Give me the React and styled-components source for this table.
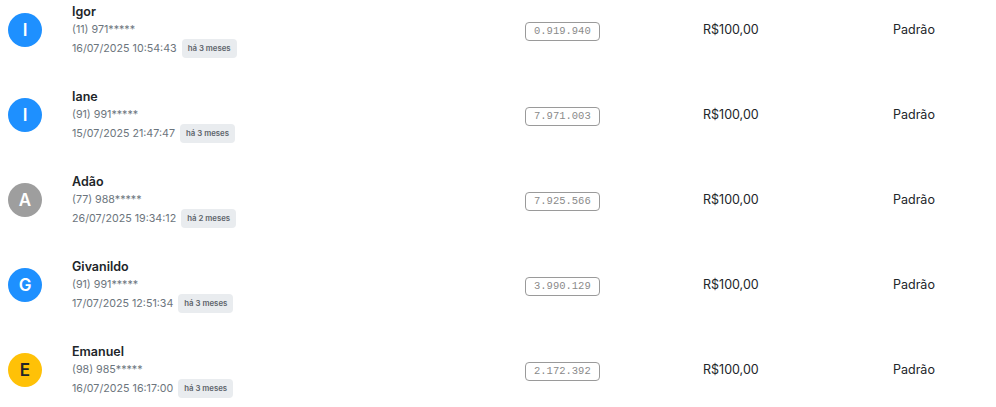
import React from 'react';
import styled, { createGlobalStyle } from 'styled-components';

const GlobalStyle = createGlobalStyle`
    body {
        margin: 0;
        background: #ffffff;
        font-family: Inter, 'Noto Sans', sans-serif;
        overflow: hidden;
    }
`;

const List = styled.div`
    margin-top: -13px;
`;

const Row = styled.div`
    display: grid;
    grid-template-columns: 72px 420px 140px 190px 1fr;
    align-items: center;
    height: 85px;
`;

const Avatar = styled.div`
    width: 34px;
    height: 34px;
    margin-left: 8px;
    border-radius: 50%;
    background: ${(p) => p.bg};
    color: ${(p) => p.fg || '#ffffff'};
    display: flex;
    align-items: center;
    justify-content: center;
    font-size: 17px;
    font-weight: 600;
`;

const Info = styled.div`
    display: flex;
    flex-direction: column;
    padding-top: 2px;
    color: #6c757d;
    font-size: 10.7px;
`;

const Name = styled.div`
    color: #212529;
    font-size: 12.5px;
    font-weight: 600;
    line-height: 18px;
`;

const Phone = styled.div`
    line-height: 18px;
`;

const DateLine = styled.div`
    display: flex;
    align-items: center;
    gap: 5px;
    line-height: 20px;
`;

const Badge = styled.span`
    background: #e9ecef;
    color: #5c636a;
    font-size: 7.8px;
    font-weight: 600;
    padding: 5px 6px;
    border-radius: 4px;
    line-height: 9px;
`;

const CodeCell = styled.div`
    padding-left: 33px;
`;

const Code = styled.span`
    display: inline-block;
    font-family: 'Liberation Mono', 'DejaVu Sans Mono', monospace;
    font-size: 10.5px;
    color: #8a8a8a;
    border: 1px solid #9a9a9a;
    border-radius: 4px;
    padding: 2px 8px;
    line-height: 13px;
`;

const Value = styled.div`
    color: #212529;
    font-size: 12.5px;
    padding-left: 71px;
`;

const Plan = styled.div`
    color: #212529;
    font-size: 12.5px;
    padding-left: 71px;
`;

const people = [
    { name: 'Igor', phone: '(11) 971*****', date: '16/07/2025 10:54:43', ago: 'há 3 meses', code: '0.919.940', bg: '#1e90ff' },
    { name: 'Iane', phone: '(91) 991*****', date: '15/07/2025 21:47:47', ago: 'há 3 meses', code: '7.971.003', bg: '#1e90ff' },
    { name: 'Adão', phone: '(77) 988*****', date: '26/07/2025 19:34:12', ago: 'há 2 meses', code: '7.925.566', bg: '#9e9e9e' },
    { name: 'Givanildo', phone: '(91) 991*****', date: '17/07/2025 12:51:34', ago: 'há 3 meses', code: '3.990.129', bg: '#1e90ff' },
    { name: 'Emanuel', phone: '(98) 985*****', date: '16/07/2025 16:17:00', ago: 'há 3 meses', code: '2.172.392', bg: '#ffc107', fg: '#212529' },
];

function App() {
    return (
        <>
            <GlobalStyle />
            <List>
                {people.map((p) => (
                    <Row key={p.code}>
                        <Avatar bg={p.bg} fg={p.fg}>{p.name[0]}</Avatar>
                        <Info>
                            <Name>{p.name}</Name>
                            <Phone>{p.phone}</Phone>
                            <DateLine>
                                {p.date}
                                <Badge>{p.ago}</Badge>
                            </DateLine>
                        </Info>
                        <CodeCell>
                            <Code>{p.code}</Code>
                        </CodeCell>
                        <Value>R$100,00</Value>
                        <Plan>Padrão</Plan>
                    </Row>
                ))}
            </List>
        </>
    );
}

export default App;
